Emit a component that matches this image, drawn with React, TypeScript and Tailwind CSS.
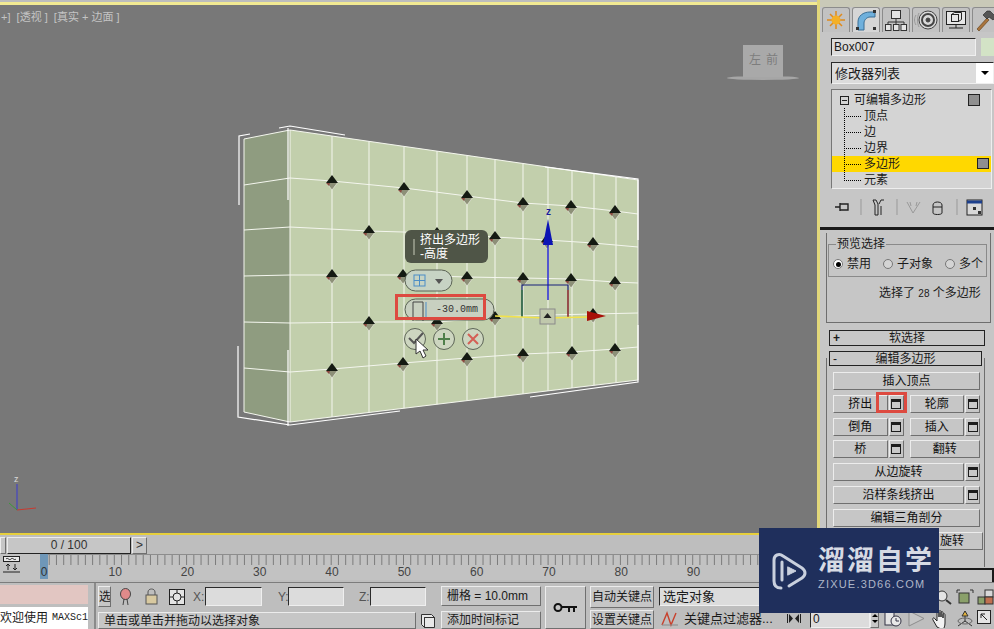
import React from "react";

const CJK = { fontFamily: '"Liberation Sans","Noto Sans CJK SC",sans-serif' };

const raised = "border border-t-[#ececec] border-l-[#ececec] border-r-[#6f6f6f] border-b-[#6f6f6f] bg-[#c6c6c6]";
const sunken = "border border-t-[#2a2a2a] border-l-[#2a2a2a] border-r-[#efefef] border-b-[#efefef] bg-[#dcdcdc]";

const topEdge = (x: number) => 130 + ((x - 290) * 50) / 348;
const botEdge = (x: number) => 422 - ((x - 290) * 42) / 348;
const cols = [332, 369, 404, 437, 467, 495, 523, 548, 572, 594, 616];
const rows = [
  "244,185 290,178 332,181 404,188 467,196 523,203 571,206 615,211 638,214",
  "244,230 290,227 369,231 437,233 495,237 547,240 593,243 638,247",
  "244,276 290,275 332,275 403,275 467,277 523,278 571,279 615,282 638,283",
  "244,322 290,323 369,322 437,322 495,317 548,315 593,314 638,313",
  "244,368 290,372 332,369 403,363 467,358 523,354 572,352 615,349 638,347",
];
const verts = [
  [332, 181], [404, 188], [467, 196], [523, 203], [571, 206], [615, 211],
  [369, 231], [437, 233], [495, 237], [547, 240], [593, 243],
  [332, 275], [403, 275], [467, 277], [523, 278], [571, 279], [615, 282],
  [369, 322], [437, 322], [495, 317], [548, 315], [593, 314],
  [332, 369], [403, 363], [467, 358], [523, 354], [572, 352], [615, 349],
];

function Scene() {
  return (
    <svg width="817" height="533" viewBox="0 0 817 533" className="absolute left-0 top-0">
      <polygon points="244,139 290,130 290,422 244,412" fill="#8f9c80" />
      <polygon points="290,130 638,180 638,380 290,422" fill="#c2cfac" />
      {cols.map((x) => (
        <line key={x} x1={x} y1={topEdge(x)} x2={x} y2={botEdge(x)} stroke="#f4f6ee" strokeWidth="1" />
      ))}
      {rows.map((p, i) => (
        <polyline key={i} points={p} fill="none" stroke="#f4f6ee" strokeWidth="1" />
      ))}
      <polyline points="244,139 290,130 638,180 638,380 290,422 244,412 244,139" fill="none" stroke="#f4f6ee" />
      <line x1="290" y1="130" x2="290" y2="422" stroke="#f4f6ee" />
      <g stroke="#ffffff" strokeWidth="1.2" fill="none">
        <polyline points="239,205 239,136 250,134" />
        <polyline points="279,128 290,126 345,135" />
        <polyline points="545,167 638,179 638,240" />
        <polyline points="238,346 238,417 290,425 400,411" />
        <polyline points="530,397 638,382 638,325" />
        <line x1="288" y1="128" x2="288" y2="200" />
        <line x1="288" y1="350" x2="288" y2="426" />
      </g>
      {verts.map(([x, y], i) => (
        <g key={i}>
          <polygon points={`${x},${y + 9} ${x - 6},${y + 1} ${x + 6},${y + 1}`} fill="#8d9078" stroke="#eef0e6" strokeWidth="0.6" />
          <polygon points={`${x},${y - 6} ${x - 6},${y + 2} ${x + 6},${y + 2}`} fill="#141a12" />
          <polygon points={`${x - 6},${y + 2} ${x - 2},${y + 2} ${x - 3},${y + 5}`} fill="#8a4a40" />
        </g>
      ))}
      {/* gizmo */}
      <line x1="548" y1="240" x2="548" y2="300" stroke="#1a1ad0" strokeWidth="1.4" />
      <polygon points="548,219 543,245 553,245" fill="#0c14b4" />
      <polyline points="522,317 522,285 568,285 568,317" fill="none" stroke="#16207a" strokeWidth="1.2" />
      <line x1="522" y1="290" x2="522" y2="317" stroke="#2f7a2f" strokeWidth="1.2" />
      <line x1="568" y1="290" x2="568" y2="317" stroke="#c04020" strokeWidth="1.2" />
      <polyline points="495,316 545,318 590,317" fill="none" stroke="#f2e24a" strokeWidth="1.6" />
      <polygon points="606,316 587,311 587,321" fill="#a81008" />
      <rect x="540" y="309" width="15" height="15" fill="#c0c8ac" stroke="#8a8a8a" />
      <polygon points="547.5,313 543.5,318 551.5,318" fill="#222" />
      {/* tripod */}
      <line x1="17" y1="510" x2="17" y2="484" stroke="#3a3ad0" />
      <line x1="17" y1="510" x2="36" y2="508" stroke="#c83a30" />
      <line x1="17" y1="510" x2="9" y2="503" stroke="#3a9a3a" />
      {/* view cube shadow */}
      <ellipse cx="763" cy="78" rx="36" ry="2" fill="#a6a6a6" />
      <rect x="743" y="45" width="40" height="32" fill="#a9a9a9" />
      {/* caddy controls */}
      <g fill="#dfe3da" stroke="#5b6356" strokeWidth="1">
        <rect x="405" y="270" width="47" height="21" rx="10.5" fill="#c7d3c4" />
        <rect x="405" y="299" width="89" height="21" rx="10.5" fill="#c8d0c0" />
      </g>
      <rect x="414" y="275" width="11" height="11" fill="none" stroke="#4c8dc6" />
      <path d="M414 280.5h11M419.5 275v11" stroke="#4c8dc6" />
      <polygon points="435,279 443,279 439,284" fill="#555" />
      <path d="M413 321V302h10v19" fill="none" stroke="#444" />
      <path d="M426 302v18" stroke="#4c8dc6" />
      <g fill="#cdd6c0" stroke="#5e6658" strokeWidth="1">
        <circle cx="415" cy="339" r="10.5" />
        <circle cx="444" cy="339" r="10.5" />
        <circle cx="473" cy="339" r="10.5" />
      </g>
      <path d="M409 338l5 5 9-10" fill="none" stroke="#555" strokeWidth="2" />
      <path d="M438 339h12M444 333v12" stroke="#4f7f4a" strokeWidth="2" />
      <path d="M468 334l10 10M478 334l-10 10" stroke="#d45f55" strokeWidth="2" />
      <polygon points="416,339 416,354 420,351 423,358 426,356 423,350 428,350" fill="#fff" stroke="#333" strokeWidth="1" />
    </svg>
  );
}

function Viewport() {
  return (
    <div className="relative h-[535px] overflow-hidden bg-[#787878] border-r-[3px] border-r-[#e2d77a] border-b-[2px] border-b-[#e6cf3c]" style={CJK}>
      <div className="h-[2px] bg-[#bdbdbd]" />
      <div className="h-[3px] bg-[#f2ea92]" />
      <Scene />
      <div className="relative whitespace-pre px-[1px] pt-[5px] text-[11px] leading-[14px] text-[#c4c4c4]">{"+]  [透视 ]  [真实 + 边面 ]"}</div>
      <div className="absolute left-[749px] top-[53px] flex w-[29px] justify-between text-[12px] leading-[14px] text-[#7d7d7d]">
        <span>左</span>
        <span>前</span>
      </div>
      <div className="absolute left-[14px] top-[474px] text-[9px] leading-[10px] text-[#d8d8d8]">z</div>
      <div className="absolute left-[546px] top-[207px] text-[10px] font-bold leading-[10px] text-[#1a1a9a]">z</div>
      <div className="absolute left-[405px] top-[230px] flex h-[33px] w-[83px] items-center gap-[5px] rounded-[6px] bg-[#4f5547] pl-[8px] text-[12px] text-white">
        <div className="h-[16px] w-[2px] bg-[#8b9080]" />
        <div>
          <div className="h-[14px] overflow-hidden leading-[14px]">挤出多边形</div>
          <div className="h-[14px] overflow-hidden leading-[14px]">-高度</div>
        </div>
      </div>
      <div className="absolute left-[436px] top-[304px] text-[10px] leading-[12px] text-[#333]" style={{ fontFamily: '"Liberation Mono",monospace' }}>-30.0mm</div>
      <div className="absolute left-[395px] top-[294px] h-[26px] w-[91px] border-[3px] border-[#dd4a40]" />
    </div>
  );
}

function Timeline() {
  return (
    <div style={CJK}>
      <div className="flex h-[19px] items-center bg-[#bebebe] pt-[1px] text-[12px] text-[#333]">
        <div className={`flex h-[17px] w-[6px] items-center overflow-hidden ${raised}`} />
        <div className={`ml-[1px] flex h-[17px] w-[124px] items-center justify-center border-b-[#222] border-r-[#222] ${raised}`}>0 / 100</div>
        <div className={`ml-[1px] flex h-[17px] w-[15px] items-center justify-center ${raised}`}>&gt;</div>
      </div>
      <div className="relative flex h-[26px] bg-[#c2c2c2]">
        <div className="flex w-[40px] shrink-0 items-start pl-[3px] pt-[2px]">
          <svg width="18" height="18" viewBox="0 0 18 18">
            <rect x="0.5" y="0.5" width="16" height="5" fill="#e8e8e8" stroke="#222" />
            <path d="M3 3c2-2 3 2 5 0s3 2 5 0" fill="none" stroke="#222" />
            <path d="M0 16h17M5 14v-6M3 10l2-2 2 2M12 8v6M10 12l2 2 2-2" fill="none" stroke="#222" />
          </svg>
        </div>
        <div className="relative flex-1">
          <svg width="780" height="11" className="block">
            <line x1="0" y1="0.5" x2="780" y2="0.5" stroke="#8d8d8d" />
            {Array.from({ length: 108 }, (_, i) => (
              <line key={i} x1={2 + i * 7.23} y1="1" x2={2 + i * 7.23} y2="11" stroke="#7c7c7c" />
            ))}
          </svg>
          <div className="flex w-[780px] pl-[39px] text-[12px] leading-[14px] text-[#444]">
            {[10, 20, 30, 40, 50, 60, 70, 80, 90].map((n) => (
              <span key={n} className="w-[72.3px] text-center">{n}</span>
            ))}
          </div>
          <div className="absolute left-0 top-0 flex h-[25px] w-[8px] items-end justify-center bg-[#6f97b8] text-[12px] leading-[14px] text-[#333]">0</div>
        </div>
      </div>
    </div>
  );
}

function MiniBox() {
  return (
    <div className={`flex h-[18px] w-[15px] shrink-0 items-center justify-center ${raised}`}>
      <div className="h-[10px] w-[10px] border border-t-[3px] border-[#1c1c1c] bg-[#c8c8c8]" />
    </div>
  );
}

function Btn({ label, w, box }: { label?: string; w?: string; box?: boolean }) {
  return (
    <div className={`flex h-[18px] gap-[1px] ${w ?? "flex-1"}`}>
      <div className={`flex flex-1 items-center justify-center text-[12px] leading-none text-[#111] ${raised}`}>{label}</div>
      {box && <MiniBox />}
    </div>
  );
}

function Tab({ active, children }: { active?: boolean; children: React.ReactNode }) {
  return (
    <div className={`flex h-[25px] w-[28px] shrink-0 items-center justify-center rounded-t-[3px] border border-b-0 border-[#8c8c8c] ${active ? "bg-[#d6d6d6]" : "bg-[#c2c2c2]"}`}>
      {children}
    </div>
  );
}

function Tabs() {
  return (
    <div className="flex h-[25px] gap-[2px] pl-[2px]">
      <Tab>
        <svg width="18" height="18" viewBox="0 0 18 18">
          <g stroke="#e08a1c" strokeWidth="1.5">
            <path d="M9 0v18M0 9h18M3 3l12 12M15 3L3 15" />
          </g>
          <circle cx="9" cy="9" r="4.5" fill="#f4b028" />
        </svg>
      </Tab>
      <Tab active>
        <svg width="22" height="22" viewBox="0 0 22 22">
          <path d="M3 21V13C3 7 8 3 15 3h5v5h-5c-3 0-6 3-6 6v7z" fill="#6fb0dc" stroke="#3a6f96" />
          <rect x="1" y="18" width="3" height="3" fill="#333" />
          <rect x="18" y="1" width="3" height="3" fill="#333" />
          <rect x="18" y="18" width="3" height="3" fill="#333" />
        </svg>
      </Tab>
      <Tab>
        <svg width="22" height="22" viewBox="0 0 22 22" fill="#e4e4e4" stroke="#333">
          <rect x="6.5" y="1.5" width="9" height="8" />
          <rect x="0.5" y="15.5" width="5.5" height="6" />
          <rect x="8.5" y="15.5" width="5.5" height="6" />
          <rect x="16" y="15.5" width="5.5" height="6" />
          <path d="M11 10v3M3 15v-2h16v2M11 13v2" fill="none" />
        </svg>
      </Tab>
      <Tab>
        <svg width="24" height="22" viewBox="0 0 24 22" fill="none" stroke="#444">
          <path d="M2 6c-2 3-2 7 0 10M5 4c-2 4-2 10 0 14" stroke="#999" />
          <circle cx="14" cy="11" r="9" fill="#d8d8d8" />
          <circle cx="14" cy="11" r="6" strokeWidth="2" />
          <circle cx="14" cy="11" r="2" fill="#444" />
        </svg>
      </Tab>
      <Tab>
        <svg width="22" height="22" viewBox="0 0 22 22" fill="none" stroke="#222">
          <rect x="1.5" y="2.5" width="19" height="13" fill="#e6e6e6" />
          <rect x="6.5" y="5.5" width="7" height="7" />
          <path d="M6.5 5.5l3-2h7v7l-3 2M4 19h14M11 16v3" />
        </svg>
      </Tab>
      <Tab>
        <svg width="22" height="22" viewBox="0 0 22 22">
          <path d="M2 20l10-11 2 2-10 11z" fill="#a9743c" stroke="#5b3b16" strokeWidth="0.6" />
          <path d="M8 6l4-4 3 0 6 6-3 3-4-3-2 2z" fill="#555" stroke="#222" strokeWidth="0.6" />
        </svg>
      </Tab>
    </div>
  );
}

function StackRow({ label, selected }: { label: string; selected?: boolean }) {
  return (
    <div className={`relative flex h-[16px] items-center pl-[32px] text-[12px] leading-none text-[#1a1a1a] ${selected ? "bg-[#ffd800]" : ""}`}>
      <div className="absolute left-[12px] top-[8px] w-[17px] border-t border-dotted border-black" />
      {label}
      {selected && <div className="absolute right-[2px] top-[2px] h-[11px] w-[12px] border border-[#222] bg-[#8f8f8f]" />}
    </div>
  );
}

function Radio({ on, label }: { on?: boolean; label: string }) {
  return (
    <div className="flex items-center gap-[4px] text-[12px] leading-none">
      <div className={`flex h-[10px] w-[10px] items-center justify-center rounded-full border border-[#777] ${on ? "bg-white" : "bg-[#d4d4d4]"}`}>
        {on && <div className="h-[5px] w-[5px] rounded-full bg-black" />}
      </div>
      {label}
    </div>
  );
}

function Panel() {
  return (
    <div className="relative h-[582px] w-[174px] shrink-0 overflow-hidden bg-[#c6c6c6] text-[#1a1a1a]" style={CJK}>
      <div className="h-[7px] bg-[#c9c9b8]" />
      <Tabs />
      <div className="mt-[6px] flex h-[18px] pl-[11px]">
        <div className={`flex w-[145px] items-center px-[2px] text-[12px] leading-none ${sunken}`}>Box007</div>
        <div className="ml-[5px] flex-1 bg-[#d3e3c6]" />
      </div>
      <div className={`ml-[11px] mt-[6px] flex h-[22px] items-center pl-[3px] text-[13px] leading-none ${sunken}`}>
        <span className="flex-1">修改器列表</span>
        <div className="flex h-full w-[17px] items-center justify-center bg-white">
          <div className="h-0 w-0 border-x-[4px] border-t-[4px] border-x-transparent border-t-black" />
        </div>
      </div>
      <div className="relative ml-[11px] mr-[2px] mt-[5px] h-[100px] border border-[#eee] border-t-[#777] border-l-[#777] bg-[#d4d4d4] pt-[2px]">
        <div className="flex h-[16px] items-center pl-[8px] text-[12px] leading-none">
          <div className="flex h-[9px] w-[9px] items-center justify-center border border-[#222]"><div className="h-[1px] w-[5px] bg-[#222]" /></div>
          <span className="ml-[5px]">可编辑多边形</span>
          <div className="ml-[42px] h-[12px] w-[12px] border border-[#222] bg-[#8f8f8f]" />
        </div>
        {["顶点", "边", "边界"].map((s) => <StackRow key={s} label={s} />)}
        <StackRow label="多边形" selected />
        <StackRow label="元素" />
        <div className="absolute left-[12px] top-[18px] h-[73px] border-l border-dotted border-black" />
      </div>
      <div className="mt-[8px] flex h-[20px] items-center pl-[13px]">
        <svg width="154" height="20" viewBox="0 0 154 20" fill="none" stroke="#222">
          <path d="M2 10h5M7 6v8M7 7h8v6H7" strokeWidth="1.4" />
          <path d="M40 3h3l2 4v11h-3V8zM51 3h-3l-2 4M48 18V9" />
          <path d="M74 5l6 11 7-11M77 5l1 4M84 5l-1 4" stroke="#999" />
          <path d="M100 8v8c0 2 9 2 9 0V8c0-4-9-4-9 0zM100 10h9" />
          <rect x="134" y="3" width="15" height="15" fill="#d8d8d8" />
          <path d="M134 5h15" stroke="#1c3f8c" strokeWidth="3" />
          <rect x="140" y="10" width="3" height="3" fill="#333" stroke="none" />
          <rect x="145" y="14" width="3" height="3" fill="#333" stroke="none" />
          <g stroke="#999"><path d="M28 2v16M64 2v16M124 2v16" /></g>
        </svg>
      </div>
      <div className="mt-[10px] h-[3px] bg-[#1a1a1a]" />
      <div className="relative ml-[6px] mr-[3px] mt-[3px] h-[90px] border-l border-b border-r border-[#6e6e6e] pl-[1px] pr-[3px] pt-[11px]">
        <div className="relative h-[33px] border border-[#8a8a8a] pt-[13px]">
          <div className="absolute -top-[7px] left-[7px] bg-[#c6c6c6] px-[1px] text-[12px] leading-[13px]">预览选择</div>
          <div className="flex justify-between pl-[4px] pr-[3px]">
            <Radio on label="禁用" />
            <Radio label="子对象" />
            <Radio label="多个" />
          </div>
        </div>
        <div className="mt-[9px] pl-[51px] text-[12px] leading-[14px]">选择了 <span className="text-[10px]">28</span> 个多边形</div>
      </div>
      <div className="mx-[9px] mt-[7px] flex h-[16px] items-center border border-[#222] bg-[#c8c8c8] px-[3px] text-[12px] leading-none">
        <b className="w-[12px]">+</b><span className="flex-1 pr-[12px] text-center">软选择</span>
      </div>
      <div className="relative mx-[6px] mt-[5px] h-[216px] pt-[7px]">
        <div className="absolute left-0 right-[3px] top-[7px] bottom-0 border-l border-r border-[#6e6e6e]" />
        <div className="relative -mt-[7px] mx-[3px] mr-[6px] flex h-[15px] items-center border border-[#222] bg-[#c8c8c8] px-[3px] text-[12px] leading-none">
          <span className="w-[12px]">-</span><span className="flex-1 pr-[12px] text-center">编辑多边形</span>
        </div>
        <div className="relative flex flex-col gap-[4.8px] pl-[7px] pr-[8px] pt-[6px]">
          <Btn label="插入顶点" w="w-full" />
          <div className="flex gap-[6px]"><Btn label="挤出" box /><Btn label="轮廓" box /></div>
          <div className="flex gap-[6px]"><Btn label="倒角" box /><Btn label="插入" box /></div>
          <div className="flex gap-[6px]"><Btn label="桥" box /><Btn label="翻转" /></div>
          <Btn label="从边旋转" w="w-full" box />
          <Btn label="沿样条线挤出" w="w-full" box />
          <Btn label="编辑三角剖分" w="w-full" />
          <div className="-mr-[3px] flex gap-[2px]"><Btn /><Btn label="旋转" w="w-[62px]" /></div>
        </div>
      </div>
      <div className="ml-[6px] mt-[1px] h-[16px] border-t-2 border-r-2 border-[#1a1a1a]" />
      <div className="absolute left-[56px] top-[392px] h-[21px] w-[31px] border-[3px] border-[#dd4a40]" />
    </div>
  );
}

function IconBtn({ w, children }: { w: string; children: React.ReactNode }) {
  return <div className={`flex shrink-0 items-center justify-center ${w}`}>{children}</div>;
}

function Bottom() {
  return (
    <div className="flex h-[47px] border-t border-[#7c7c7c] bg-[#bebebe] text-[12px] leading-none text-[#1a1a1a]" style={CJK}>
      <div className="flex w-[88px] shrink-0 flex-col pt-[2px]">
        <div className="h-[19px] bg-[#e2c6c2]" />
        <div className="mt-[3px] flex flex-1 items-center overflow-hidden whitespace-nowrap bg-white text-[12px]">
          欢迎使用 <span className="ml-[4px] text-[10px]" style={{ fontFamily: '"Liberation Mono",monospace' }}>MAXSc1</span>
        </div>
      </div>
      <div className="ml-[6px] w-[2px] shrink-0 bg-[#8a8a8a]" />
      <div className="ml-[2px] flex w-[338px] shrink-0 flex-col pt-[3px]">
        <div className="flex h-[21px] items-center">
          <div className={`flex h-[21px] w-[13px] items-center overflow-hidden ${raised}`}>选</div>
          <div className="ml-[3px] flex w-[22px] justify-center">
            <svg width="11" height="18" viewBox="0 0 11 18"><ellipse cx="5.5" cy="6" rx="5" ry="5.5" fill="#e08a8a" stroke="#444" /><path d="M4 11l-1 6M7 11l1 6" stroke="#444" /></svg>
          </div>
          <div className="ml-[4px] flex w-[22px] justify-center">
            <svg width="13" height="17" viewBox="0 0 13 17" fill="none" stroke="#555"><rect x="1" y="7" width="11" height="9" fill="#d8c9a0" /><path d="M3 7V4c0-4 7-4 7 0v3" /></svg>
          </div>
          <div className="ml-[4px] flex w-[22px] justify-center">
            <svg width="16" height="16" viewBox="0 0 16 16" fill="none" stroke="#222"><rect x="0.5" y="0.5" width="15" height="15" fill="#e4e4e4" /><circle cx="8" cy="8" r="4" /><path d="M8 0v4M8 12v4M0 8h4M12 8h4" /></svg>
          </div>
          <span className="ml-[5px] w-[12px] text-[#555]">X:</span>
          <div className={`h-[19px] w-[57px] ${sunken}`} />
          <span className="ml-[16px] w-[10px] text-[#555]">Y:</span>
          <div className={`h-[19px] w-[56px] ${sunken}`} />
          <span className="ml-[15px] w-[11px] text-[#555]">Z:</span>
          <div className={`h-[19px] w-[56px] ${sunken}`} />
        </div>
        <div className="mt-[5px] flex flex-1 items-center">
          <div className={`flex h-full w-[318px] items-center px-[5px] ${raised}`}>单击或单击并拖动以选择对象</div>
          <svg className="ml-[5px]" width="14" height="14" viewBox="0 0 14 14" fill="#e8e8e8" stroke="#333"><path d="M3.5 3.5h10v10h-10zM.5 .5h10l3 3h-10v10l-3-3z" /></svg>
        </div>
      </div>
      <div className="ml-[5px] flex w-[100px] shrink-0 flex-col pt-[3px]">
        <div className={`flex h-[20px] items-center pl-[5px] ${raised}`}>栅格 = 10.0mm</div>
        <div className={`mt-[5px] flex flex-1 items-center pl-[5px] ${raised}`}>添加时间标记</div>
      </div>
      <div className={`ml-[4px] mt-[3px] flex w-[41px] shrink-0 items-center justify-center ${raised}`}>
        <svg width="25" height="10" viewBox="0 0 25 10" fill="none" stroke="#111" strokeWidth="2"><circle cx="5" cy="4.5" r="3.5" /><path d="M9 4h15M16 4v5M21 4v5" /></svg>
      </div>
      <div className="ml-[4px] flex w-[64px] shrink-0 flex-col pt-[3px]">
        <div className={`flex h-[22px] items-center justify-center ${raised}`}>自动关键点</div>
        <div className={`mt-[2px] flex flex-1 items-center justify-center ${raised}`}>设置关键点</div>
      </div>
      <div className="ml-[5px] flex w-[125px] shrink-0 flex-col pt-[4px]">
        <div className={`flex h-[19px] items-center pl-[3px] text-[13px] ${sunken}`}>选定对象</div>
        <div className="mt-[2px] flex flex-1 items-center">
          <svg width="23" height="18" viewBox="0 0 23 18" fill="none"><path d="M3 15l5-12 4 12 5-12" stroke="#c8402c" strokeWidth="1.4" /><path d="M3 15h16" stroke="#888" /></svg>
          <span className="ml-[2px] whitespace-nowrap text-[13px]">关键点过滤器...</span>
        </div>
      </div>
      <div className="ml-[1px] flex flex-1 flex-col pt-[3px]">
        <div className="flex h-[22px] items-center justify-end gap-[3px] pr-[1px]">
          <svg width="18" height="16" viewBox="0 0 18 16" fill="none" stroke="#333"><circle cx="7" cy="7" r="5" fill="#e4e4e4" /><path d="M11 11l5 4" strokeWidth="2" /></svg>
          <svg width="18" height="16" viewBox="0 0 18 16" fill="none" stroke="#333"><rect x="3" y="4" width="10" height="10" fill="#8aa06a" /><path d="M1 1v3M1 1h3M17 1v3M17 1h-3" /></svg>
          <svg width="18" height="16" viewBox="0 0 18 16" stroke="#333"><rect x="1" y="8" width="7" height="7" fill="#8aa06a" /><rect x="8" y="1" width="8" height="7" fill="#d8d8d8" /><rect x="8" y="8" width="8" height="7" fill="#c07050" /></svg>
        </div>
        <div className="flex flex-1 items-center">
          <IconBtn w="w-[18px]">
            <svg width="16" height="9" viewBox="0 0 16 9" fill="#222"><path d="M1 0h1v9H1zM14 0h1v9h-1zM7 4.5L3 0v9zM9 4.5l4-4.5v9z" /></svg>
          </IconBtn>
          <div className={`ml-[7px] flex h-[19px] w-[60px] items-center pl-[2px] ${sunken}`}>0</div>
          <div className={`flex h-[19px] w-[9px] flex-col items-center justify-center gap-[3px] ${raised}`}>
            <div className="h-0 w-0 border-x-[3px] border-b-[3px] border-x-transparent border-b-black" />
            <div className="h-0 w-0 border-x-[3px] border-t-[3px] border-x-transparent border-t-black" />
          </div>
          <IconBtn w="w-[22px] ml-[3px]">
            <svg width="18" height="17" viewBox="0 0 18 17" fill="none" stroke="#334"><rect x="1" y="1" width="9" height="14" fill="#e4e4e4" /><circle cx="12" cy="11" r="5" fill="#e8e8e8" /><path d="M12 8v3h3" /></svg>
          </IconBtn>
          <IconBtn w="w-[24px]">
            <svg width="17" height="17" viewBox="0 0 17 17"><polygon points="1,1 16,8.5 1,16" fill="#c6c6c6" stroke="#8d8d8d" /></svg>
          </IconBtn>
          <IconBtn w="w-[26px]">
            <svg width="18" height="18" viewBox="0 0 18 18" fill="#f2f2f2" stroke="#222"><path d="M5 17L1 10c-1-2 1-3 2-1l2 2V3c0-2 2-2 2 0v4-5c0-2 2-2 2 0v5-4c0-2 2-2 2 0v5-3c0-2 2-2 2 0v8c0 3-1 5-2 7z" /></svg>
          </IconBtn>
          <IconBtn w="w-[21px]">
            <svg width="18" height="18" viewBox="0 0 18 18" fill="none" stroke="#333"><path d="M9 1v10M9 11l-7 5M9 11l7 5" /><ellipse cx="9" cy="11" rx="7" ry="3" stroke="#666" /><polygon points="9,1 6,6 12,6" fill="#e2b23c" /></svg>
          </IconBtn>
          <IconBtn w="w-[21px]">
            <svg width="17" height="17" viewBox="0 0 17 17" fill="none" stroke="#222"><rect x="0.5" y="0.5" width="13" height="13" fill="#e4e4e4" /><path d="M4 4l6 6M4 4h4M4 4v4" /></svg>
          </IconBtn>
        </div>
      </div>
    </div>
  );
}

function Watermark() {
  return (
    <div className="absolute left-[759px] top-[528px] flex h-[85px] w-[180px] items-center bg-[#1f2f5c] pl-[12px]" style={CJK}>
      <svg width="36" height="38" viewBox="0 0 36 38" fill="none" stroke="#c9d0de" strokeWidth="3" strokeLinejoin="round" strokeLinecap="round">
        <path d="M10 36C5 36 3 33 3 29V8c0-5 5-7 9-4l19 12c4 3 4 7 0 10L18 34" />
        <path d="M11 10v18" />
        <polygon points="17,15 25,19 17,23" fill="#c9d0de" strokeWidth="1" />
      </svg>
      <div className="mb-[6px] ml-[11px] flex flex-col">
        <div className="text-[27px] font-bold leading-[30px] tracking-[2px] text-[#d6dae4]">溜溜自学</div>
        <div className="mt-[2px] text-[11px] leading-[12px] tracking-[1.2px] text-[#aeb6c8]">ZIXUE.3D66.COM</div>
      </div>
    </div>
  );
}

export default function App() {
  return (
    <div className="relative h-[629px] w-[994px] overflow-hidden bg-[#bebebe]">
      <div className="flex h-[582px]">
        <div className="w-[820px] shrink-0">
          <Viewport />
          <Timeline />
        </div>
        <Panel />
      </div>
      <Bottom />
      <Watermark />
    </div>
  );
}
